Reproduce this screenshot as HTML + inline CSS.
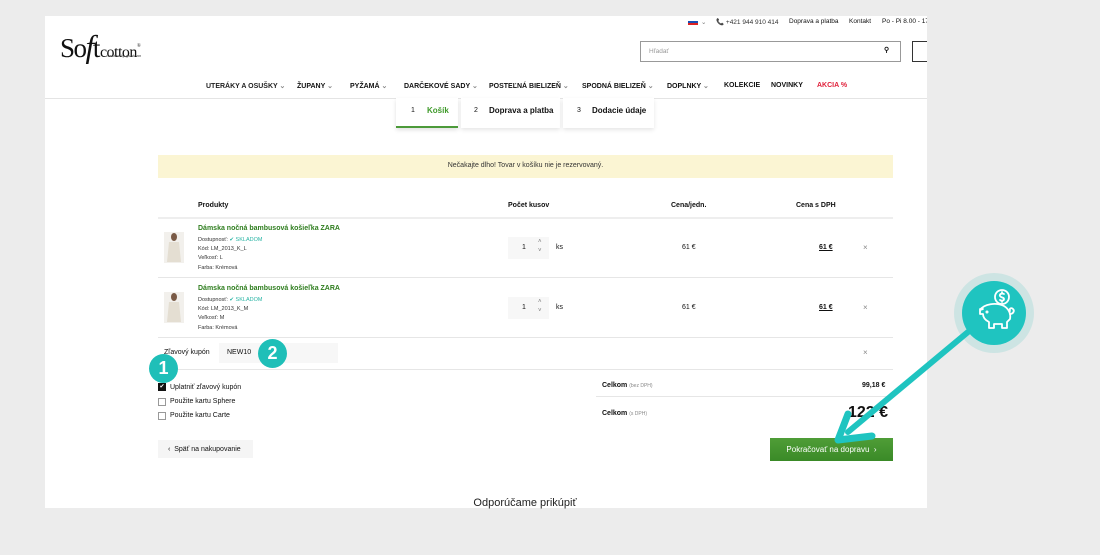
<!DOCTYPE html>
<html><head><meta charset="utf-8"><style>
*{margin:0;padding:0;box-sizing:border-box}
body{width:1100px;height:555px;background:#ececec;font-family:"Liberation Sans",sans-serif;position:relative;overflow:hidden;color:#111}
.a{position:absolute;white-space:nowrap}
.page{position:absolute;left:45px;top:16px;width:882px;height:492px;background:#fff}
.b{font-weight:bold}
.s6{font-size:6.5px}.s7{font-size:7px}.s8{font-size:8px}
.line{position:absolute;height:1px;background:#e6e6e6}
.g{color:#2e7d1e}
.t{color:#2bb5a5}
.circ{position:absolute;border-radius:50%;background:#1fbfb8;color:#fff;font-weight:bold;text-align:center}
</style></head><body>
<div class="page"></div>
<!-- top bar -->
<div class="a" style="left:688px;top:19px;width:10px;height:6px;background:linear-gradient(#fff 33%,#1a4fb5 33% 66%,#d22 66%)"></div>
<div class="a s6" style="left:701px;top:18px;color:#777">⌄</div>
<div class="a s6" style="left:716px;top:18px;color:#333">📞 +421 944 910 414</div>
<div class="a s6" style="left:789px;top:18px">Doprava a platba</div>
<div class="a s6" style="left:849px;top:18px">Kontakt</div>
<div class="a s6" style="left:882px;top:18px;width:45px;overflow:hidden">Po - Pi 8.00 - 17</div>
<!-- logo -->
<div class="a" style="left:60px;top:28px;font-family:'Liberation Serif',serif;font-size:27px;letter-spacing:-1.5px">So<i style="font-size:32px">f</i>t<span style="font-size:16px;margin-left:1px;letter-spacing:-0.5px">cotton</span><sup style="font-size:5px">®</sup></div>
<div class="a" style="left:106px;top:53px;font-size:4px;font-style:italic;color:#444">created by goldman</div>
<!-- search -->
<div class="a" style="left:640px;top:41px;width:261px;height:21px;border:1px solid #999"></div>
<div class="a s6" style="left:649px;top:48px;color:#999">Hľadať</div>
<div class="a s7 b" style="left:884px;top:46px">⚲</div>
<div class="a" style="left:912px;top:41px;width:15px;height:21px;border:1px solid #333;border-right:none"></div>
<!-- nav -->
<div class="a b s7" style="left:206px;top:82px;color:#222">UTERÁKY A OSUŠKY <span style="color:#888">⌄</span></div>
<div class="a b s7" style="left:297px;top:82px">ŽUPANY <span style="color:#888">⌄</span></div>
<div class="a b s7" style="left:350px;top:82px">PYŽAMÁ <span style="color:#888">⌄</span></div>
<div class="a b s7" style="left:404px;top:82px">DARČEKOVÉ SADY <span style="color:#888">⌄</span></div>
<div class="a b s7" style="left:489px;top:82px">POSTEĽNÁ BIELIZEŇ <span style="color:#888">⌄</span></div>
<div class="a b s7" style="left:582px;top:82px">SPODNÁ BIELIZEŇ <span style="color:#888">⌄</span></div>
<div class="a b s7" style="left:667px;top:82px">DOPLNKY <span style="color:#888">⌄</span></div>
<div class="a b s7" style="left:724px;top:82px">KOLEKCIE</div>
<div class="a b s7" style="left:771px;top:82px">NOVINKY</div>
<div class="a b s7" style="left:817px;top:82px;color:#e0203a">AKCIA %</div>
<div class="line" style="left:45px;top:98px;width:882px;background:#e4e4e4"></div>
<!-- steps -->
<div class="a" style="left:396px;top:98px;width:62px;height:30px;background:#fff;box-shadow:0 2px 4px rgba(0,0,0,.12);border-bottom:2px solid #4c9a3a"></div>
<div class="a s7" style="left:411px;top:107px">1</div><div class="a b s8" style="left:427px;top:106px;color:#3f9a2a">Košík</div>
<div class="a" style="left:461px;top:98px;width:99px;height:30px;background:#fff;box-shadow:0 2px 4px rgba(0,0,0,.1)"></div>
<div class="a s7" style="left:474px;top:107px">2</div><div class="a b s8" style="left:489px;top:106px">Doprava a platba</div>
<div class="a" style="left:563px;top:98px;width:91px;height:30px;background:#fff;box-shadow:0 2px 4px rgba(0,0,0,.1)"></div>
<div class="a s7" style="left:577px;top:107px">3</div><div class="a b s8" style="left:592px;top:106px">Dodacie údaje</div>
<!-- banner -->
<div class="a" style="left:158px;top:155px;width:735px;height:23px;background:#fbf5d3"></div>
<div class="a s7" style="left:158px;top:162px;width:735px;text-align:center;color:#333">Nečakajte dlho! Tovar v košíku nie je rezervovaný.</div>
<!-- table -->
<div class="a b s7" style="left:198px;top:202px">Produkty</div>
<div class="a b s7" style="left:508px;top:202px">Počet kusov</div>
<div class="a b s7" style="left:671px;top:202px">Cena/jedn.</div>
<div class="a b s7" style="left:796px;top:202px">Cena s DPH</div>
<div class="line" style="left:158px;top:217px;width:735px;height:2px;background:#eee"></div>
<div class="line" style="left:158px;top:277px;width:735px"></div>
<div class="line" style="left:158px;top:337px;width:735px"></div>
<div class="line" style="left:158px;top:369px;width:735px"></div>

<svg class="a" style="left:164px;top:232px" width="20" height="31"><rect width="20" height="31" fill="#f2f0ec"/><ellipse cx="10" cy="5" rx="3" ry="4" fill="#7a5a46"/><path d="M5 10h10l2 20H3z" fill="#e4ded2"/></svg>
<div class="a b s7 g" style="left:198px;top:225px">Dámska nočná bambusová košieľka ZARA</div>
<div class="a" style="left:198px;top:236px;font-size:5.5px;line-height:9.2px;color:#333">Dostupnosť: <span class="t">✔ SKLADOM</span><br>Kód: LM_2013_K_L<br>Veľkosť: L<br>Farba: Krémová</div>
<div class="a" style="left:508px;top:237px;width:41px;height:22px;background:#f7f7f7"></div>
<div class="a s7" style="left:522px;top:244px">1</div><div class="a" style="left:538px;top:238px;font-size:6px;color:#777;line-height:9px">˄<br>˅</div>
<div class="a s7" style="left:556px;top:244px">ks</div>
<div class="a s7" style="left:682px;top:244px">61 €</div>
<div class="a b s7" style="left:819px;top:244px;text-decoration:underline">61 €</div>
<div class="a s8" style="left:863px;top:243px;color:#888">×</div>

<svg class="a" style="left:164px;top:292px" width="20" height="31"><rect width="20" height="31" fill="#f2f0ec"/><ellipse cx="10" cy="5" rx="3" ry="4" fill="#7a5a46"/><path d="M5 10h10l2 20H3z" fill="#e4ded2"/></svg>
<div class="a b s7 g" style="left:198px;top:285px">Dámska nočná bambusová košieľka ZARA</div>
<div class="a" style="left:198px;top:296px;font-size:5.5px;line-height:9.2px;color:#333">Dostupnosť: <span class="t">✔ SKLADOM</span><br>Kód: LM_2013_K_M<br>Veľkosť: M<br>Farba: Krémová</div>
<div class="a" style="left:508px;top:297px;width:41px;height:22px;background:#f7f7f7"></div>
<div class="a s7" style="left:522px;top:304px">1</div><div class="a" style="left:538px;top:298px;font-size:6px;color:#777;line-height:9px">˄<br>˅</div>
<div class="a s7" style="left:556px;top:304px">ks</div>
<div class="a s7" style="left:682px;top:304px">61 €</div>
<div class="a b s7" style="left:819px;top:304px;text-decoration:underline">61 €</div>
<div class="a s8" style="left:863px;top:303px;color:#888">×</div>

<div class="a s7" style="left:164px;top:349px">Zľavový kupón</div>
<div class="a" style="left:219px;top:343px;width:119px;height:20px;background:#f7f7f7"></div>
<div class="a s7" style="left:227px;top:349px">NEW10</div>
<div class="a s8" style="left:863px;top:348px;color:#888">×</div>

<div class="a" style="left:158px;top:383px;width:8px;height:8px;background:#111;color:#fff;font-size:6px;line-height:8px;text-align:center">✔</div>
<div class="a s7" style="left:170px;top:384px">Uplatniť zľavový kupón</div>
<div class="a" style="left:158px;top:398px;width:8px;height:8px;border:1px solid #999"></div>
<div class="a s7" style="left:170px;top:398px">Použite kartu Sphere</div>
<div class="a" style="left:158px;top:412px;width:8px;height:8px;border:1px solid #999"></div>
<div class="a s7" style="left:170px;top:412px">Použite kartu Carte</div>

<div class="line" style="left:596px;top:396px;width:297px"></div>
<div class="a b s7" style="left:602px;top:382px">Celkom <span style="font-weight:normal;font-size:5px;color:#888">(bez DPH)</span></div>
<div class="a b s7" style="left:862px;top:382px">99,18 €</div>
<div class="a b s7" style="left:602px;top:410px">Celkom <span style="font-weight:normal;font-size:5px;color:#888">(s DPH)</span></div>
<div class="a b" style="left:848px;top:404px;font-size:16px">122 €</div>

<div class="a" style="left:158px;top:440px;width:95px;height:18px;background:#f5f5f5"></div>
<div class="a s7" style="left:168px;top:446px">‹&nbsp; Späť na nakupovanie</div>
<div class="a" style="left:770px;top:438px;width:123px;height:23px;background:linear-gradient(#4f9d37,#3a8a27)"></div>
<div class="a s8" style="left:770px;top:445px;width:123px;text-align:center;color:#fff">Pokračovať na dopravu&nbsp; ›</div>
<div class="a" style="left:45px;top:497px;width:960px;text-align:center;font-size:11px;color:#222">Odporúčame prikúpiť</div>

<!-- annotations -->
<div class="circ" style="left:149px;top:354px;width:29px;height:29px;font-size:18px;line-height:29px">1</div>
<div class="circ" style="left:258px;top:339px;width:29px;height:29px;font-size:18px;line-height:29px">2</div>
<svg class="a" style="left:0;top:0" width="1100" height="555">
<circle cx="994" cy="313" r="40" fill="#1fbfb8" opacity=".15"/>
<circle cx="994" cy="313" r="32" fill="#1fc4c0"/>
<g fill="none" stroke="#fff" stroke-width="1.8" stroke-linecap="round" stroke-linejoin="round">
<circle cx="1002" cy="297" r="7"/>
<path d="M1004 294c-2-1-5 0-4 2s4 1 4 3-3 2-4 1M1002 292v1.5M1002 300.5v1.5"/>
<path d="M980 310c4-6 16-8 24-4 5 3 7 8 6 13l-3 3v6h-5v-4h-8v4h-5v-6c-4-2-6-5-6-8h-3v-5h3z"/>
<path d="M1010 314c3 0 5-3 3-5s-4 0-3 2"/>
<circle cx="987" cy="312" r=".6"/>
</g>
<path d="M968 332 L848 432" stroke="#1fc4c0" stroke-width="6" stroke-linecap="round"/>
<path d="M838 440 L848 414 M838 440 L872 436" stroke="#1fc4c0" stroke-width="7" stroke-linecap="round"/>
</svg>
</body></html>
